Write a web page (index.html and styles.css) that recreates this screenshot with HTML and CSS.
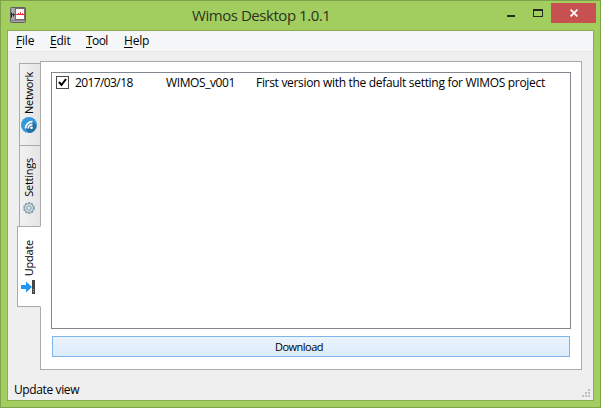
FILE: index.html
```html
<!DOCTYPE html>
<html lang="en">
<head>
<meta charset="utf-8">
<title>Wimos Desktop 1.0.1</title>
<link rel="stylesheet" href="styles.css">
</head>
<body>
<div class="window">
  <header class="titlebar">
    <svg class="app-icon" width="16" height="16" viewBox="0 0 16 16">
      <rect x=".5" y=".5" width="15" height="15" rx="1" fill="#aaa6a8" stroke="#625d60"/>
      <path d="M1 13.500h14" stroke="#858184"/>
      <rect x="5.500" y="1.500" width="9" height="11" fill="#fff" stroke="#77696c"/>
      <path d="M1.500 5.500v5M3.500 6.500v3" stroke="#222" stroke-width="1"/>
      <path d="M2 7.500h3" stroke="#333"/>
      <path d="M6 7.500h9M8.500 6v2M10.500 5v3M12.500 6v2" fill="none" stroke="#f03038"/>
    </svg>
    <h1 class="title">Wimos Desktop 1.0.1</h1>
    <div class="controls">
      <span class="control minimize"></span>
      <span class="control maximize"></span>
      <span class="control close"><svg width="8" height="8" viewBox="0 0 8 8"><path d="M.6 .6l6.800 6.800M7.400 .6L.6 7.400" stroke="#fff" stroke-width="1.800"/></svg></span>
    </div>
  </header>
  <div class="client">
    <nav class="menu"><span class="m-file"><u>F</u>ile</span><span class="m-edit"><u>E</u>dit</span><span class="m-tool"><u>T</u>ool</span><span class="m-help"><u>H</u>elp</span></nav>
    <main class="content">
      <div class="tabs">
        <div class="tab network">
          <span class="tab-label">Network</span>
          <svg width="16" height="16" viewBox="0 0 16 16">
            <circle cx="8" cy="8" r="8" fill="#3498db"/>
            <path d="M12 5l3.500 3.500A8 8 0 0 1 8.500 16L4.500 12z" fill="#28709f"/>
            <circle cx="10.500" cy="10.800" r="1.300" fill="#fff"/>
            <path d="M7.200 11.500A3.700 3.700 0 0 1 11.500 7.600M4.600 11.500A6.600 6.600 0 0 1 11.500 4.700" fill="none" stroke="#fff" stroke-width="1.700"/>
          </svg>
        </div>
        <div class="tab settings">
          <span class="tab-label">Settings</span>
          <svg width="12" height="12" viewBox="0 0 12 12" fill="none" stroke="#6b8ba0">
            <circle cx="6" cy="6" r="5.200" stroke-width="1.200" stroke-dasharray="2.200 1.070"/>
            <circle cx="6" cy="6" r="4.300" stroke-width=".8"/>
            <circle cx="6" cy="6" r="2.200" stroke-width="1"/>
          </svg>
        </div>
        <div class="tab update">
          <span class="tab-label">Update</span>
          <svg class="update-icon" width="14" height="14" viewBox="0 0 14 14">
            <path d="M0 5h5V1.500l6 5.500-6 5.500V9H0z" fill="#2196f3"/>
            <path d="M11 0h3v14h-3z" fill="#454545"/>
            <path d="M12 9h1v1h-1zM12 11h1v1h-1z" fill="#aaa"/>
          </svg>
        </div>
      </div>
      <section class="pane">
        <div class="list">
          <div class="row">
            <span class="check"><svg width="11" height="11" viewBox="0 0 11 11"><path d="M2 5l2.500 3L9 2" fill="none" stroke="#000" stroke-width="2"/></svg></span>
            <span class="date">2017/03/18</span>
            <span class="version">WIMOS_v001</span>
            <span class="description">First version with the default setting for WIMOS project</span>
          </div>
        </div>
        <button class="download">Download</button>
      </section>
    </main>
    <footer class="status">
      <span class="status-text">Update view</span>
      <svg class="grip" width="8" height="8" viewBox="0 0 8 8"><path d="M6 0h2v2H6zM3 3h2v2H3zM6 3h2v2H6zM0 6h2v2H0zM3 6h2v2H3zM6 6h2v2H6z" fill="#bfbfbf"/></svg>
    </footer>
  </div>
</div>
</body>
</html>
```
FILE: styles.css
```css
* { box-sizing: border-box; }
body { margin: 0; overflow: hidden; font: 12px/16px "Open Sans", "Noto Sans", sans-serif; color: #000; }
svg { display: block; flex: none; }
.window { width: 601px; height: 408px; border: 1px solid #80a24b; background: #a2cd5f; padding: 0 6px 6px; display: flex; flex-direction: column; }
.titlebar { height: 29px; flex: none; display: flex; }
.app-icon { margin: 6px 0 0 3px; }
.title { margin: 2px 0 0 166px; width: 300px; font-size: 15px; line-height: 24px; font-weight: 400; letter-spacing: -.45px; color: #2c3520; white-space: nowrap; }
.controls { display: flex; margin: 2px -2px 0 auto; height: 20px; }
.minimize { width: 8px; height: 2px; background: #252b20; margin: 12px 18px 0 0; }
.maximize { width: 10px; height: 8px; border: 1px solid #252b20; border-top-width: 2px; margin: 6px 8px 0 0; }
.close { width: 45px; height: 20px; background: #c75050; display: flex; align-items: center; justify-content: center; }
.client { flex: 1; border: 1px solid #89ad50; background: #efefef; display: flex; flex-direction: column; }
.menu { height: 21px; flex: none; background: #f5f6f7; border-bottom: 1px solid #e5e7ea; padding: 2px 0 0 8px; display: flex; letter-spacing: -.2px; }
.menu u { text-underline-offset: 1.500px; text-decoration-thickness: 1px; text-decoration-skip-ink: none; }
.m-file { width: 34px; }
.m-edit { width: 36px; }
.m-tool { width: 38px; letter-spacing: -.6px; }
.content { height: 318px; flex: none; display: flex; padding: 9px 11px 0 9px; }
.tabs { width: 24px; margin-right: -1px; padding-top: 2px; display: flex; flex-direction: column; align-items: flex-end; }
.tab { position: relative; width: 22px; border: 1px solid #ababab; background: linear-gradient(90deg, #f2f2f2, #e4e4e4); display: flex; flex-direction: column; align-items: center; justify-content: flex-end; gap: 3px; }
.tab-label { writing-mode: vertical-rl; transform: rotate(180deg); font-size: 11px; line-height: 16px; letter-spacing: -.25px; white-space: nowrap; }
.network { height: 83px; padding-bottom: 12px; padding-right: 2px; }
.settings { height: 82px; margin-top: -1px; padding-bottom: 12px; padding-right: 2px; gap: 5px; }
.update { width: 24px; height: 81px; margin-top: -1px; padding: 0 0 12px; background: #fff; border-right-color: #fff; z-index: 1; gap: 4px; }
.update-icon { margin-right: 2px; }
.pane { width: 542px; height: 309px; flex: none; border: 1px solid #ababab; background: #fff; padding: 10px; display: flex; flex-direction: column; }
.list { height: 257px; border: 1px solid #828790; padding: 2px 4px; }
.row { display: flex; align-items: flex-start; white-space: nowrap; }
.check { width: 13px; height: 13px; border: 1px solid #4a4a4a; margin: 1px 6px 0 0; }
.date { width: 91px; letter-spacing: -.6px; }
.version { width: 90px; letter-spacing: -.4px; }
.description { letter-spacing: -.31px; }
.download { margin: 7px 1px 0; height: 21px; border: 1px solid #7eb4ea; background: linear-gradient(#ebf4fc, #dcecfc); font: 11px/17px "Open Sans", "Noto Sans", sans-serif; letter-spacing: -.5px; padding: 0 24px 1px 0; color: #000; }
.status { flex: 1; display: flex; padding: 12px 1px 0 6px; justify-content: space-between; }
.status-text { line-height: 16px; letter-spacing: -.38px; }
.grip { margin: 7px 2px 0 0; }
```
